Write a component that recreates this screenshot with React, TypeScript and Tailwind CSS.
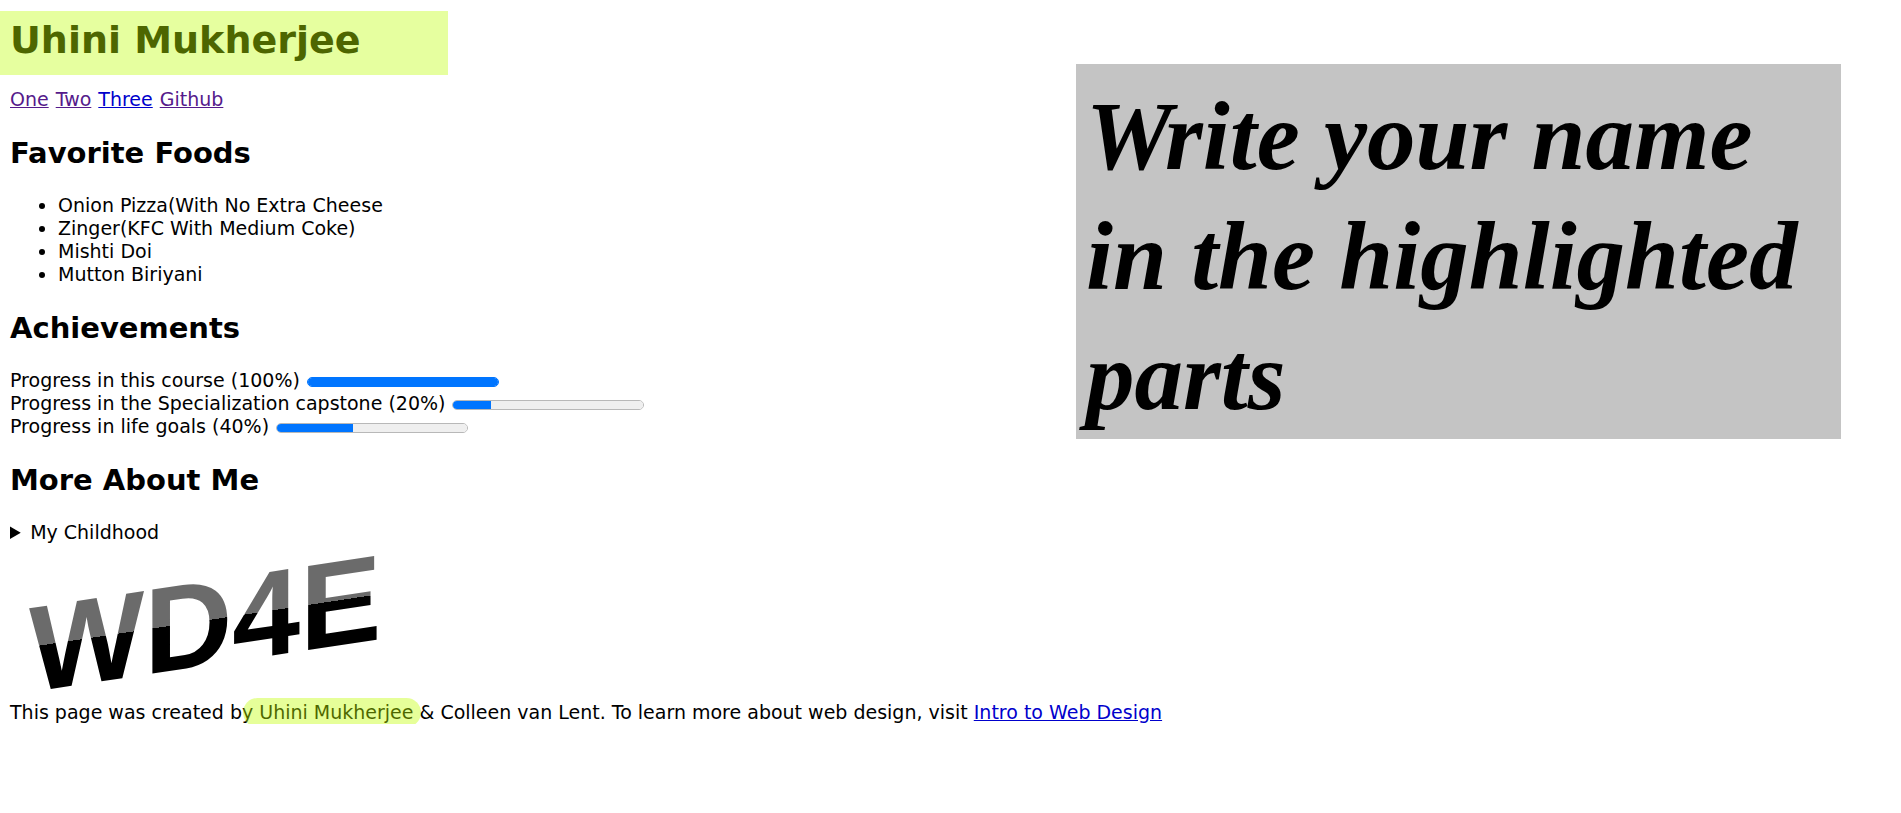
const visited = "text-[#551a8b] underline";
const unvisited = "text-[#0000cc] underline";

const foods = [
  "Onion Pizza(With No Extra Cheese",
  "Zinger(KFC With Medium Coke)",
  "Mishti Doi",
  "Mutton Biriyani",
];

const goals = [
  { id: "course", label: "Progress in this course (100%)", value: 100 },
  { id: "capstone", label: "Progress in the Specialization capstone (20%)", value: 20 },
  { id: "life", label: "Progress in life goals (40%)", value: 40 },
];

function SectionTitle({ children }: { children: string }) {
  return <h2 className="mt-[25px] mb-6 text-[29px] leading-[34px] font-bold">{children}</h2>;
}

function ProgressBar({ id, value }: { id: string; value: number }) {
  const fill = value === 100 ? "border-[#0075ff]" : "border-[#b8b8b8]";
  return (
    <progress
      id={id}
      value={value}
      max={100}
      className={`mt-0.5 h-[10px] w-48 appearance-none overflow-hidden rounded-full border bg-[#efefef] [&::-webkit-progress-bar]:bg-[#efefef] [&::-webkit-progress-value]:bg-[#0075ff] ${fill}`}
    />
  );
}

function Logo() {
  return (
    <svg viewBox="0 0 384 157" className="block h-[157px] w-[384px] overflow-visible" role="img" aria-label="WD4E">
      <defs>
        <linearGradient id="fade" gradientUnits="userSpaceOnUse" x1="0" y1="0" x2="0" y2="150">
          <stop offset="0.707" stopColor="#6b6b6b" />
          <stop offset="0.707" stopColor="#000" />
        </linearGradient>
      </defs>
      <text
        x="19"
        y="151"
        transform="skewY(-8.6)"
        fill="url(#fade)"
        fontFamily="Liberation Sans, Arial, sans-serif"
        fontWeight="700"
        fontSize="122"
      >
        WD4E
      </text>
    </svg>
  );
}

export default function App() {
  return (
    <div className="bg-white pt-[11px] font-['DejaVu_Sans',Verdana,sans-serif] text-[19px] leading-[23px] text-black">
      <div className="flex items-start justify-between">
        <div className="min-w-0">
          <h1 className="h-16 w-[448px] bg-[#e6ff9f] px-2.5 text-[38px] leading-[58px] font-bold text-[#4d6600]">
            Uhini Mukherjee
          </h1>
          <div className="px-2.5 pt-[13px]">
            <nav className="flex gap-[7px]">
              <a href="#one" className={visited}>One</a>
              <a href="#two" className={visited}>Two</a>
              <a href="#three" className={unvisited}>Three</a>
              <a href="#github" className={visited}>Github</a>
            </nav>
            <SectionTitle>Favorite Foods</SectionTitle>
            <ul className="list-disc pl-12">
              {foods.map((food) => (
                <li key={food}>{food}</li>
              ))}
            </ul>
            <SectionTitle>Achievements</SectionTitle>
            {goals.map((goal) => (
              <div key={goal.id} className="flex items-center gap-[7px]">
                <label htmlFor={goal.id}>{goal.label}</label>
                <ProgressBar id={goal.id} value={goal.value} />
              </div>
            ))}
            <SectionTitle>More About Me</SectionTitle>
            <details>
              <summary>My Childhood</summary>
            </details>
          </div>
        </div>
        <aside className="mt-[53px] mr-[60px] w-[765px] bg-[#c4c4c4] pt-[13px] pr-2 pb-0.5 pl-2.5 font-['Liberation_Serif','Times_New_Roman',serif] text-[97px] leading-[120px] font-bold italic">
          Write your name in the highlighted parts
        </aside>
      </div>
      <footer className="px-2.5">
        <Logo />
        <p>
          This page was created by{" "}
          <span className="relative inline-block">
            Uhini Mukherjee
            <span className="absolute -inset-y-[3px] -right-2 -left-4 rounded-full bg-[#c0ff00]/40" />
          </span>{" "}
          &amp; Colleen van Lent. To learn more about web design, visit{" "}
          <a href="#intro" className={unvisited}>Intro to Web Design</a>
        </p>
      </footer>
    </div>
  );
}
